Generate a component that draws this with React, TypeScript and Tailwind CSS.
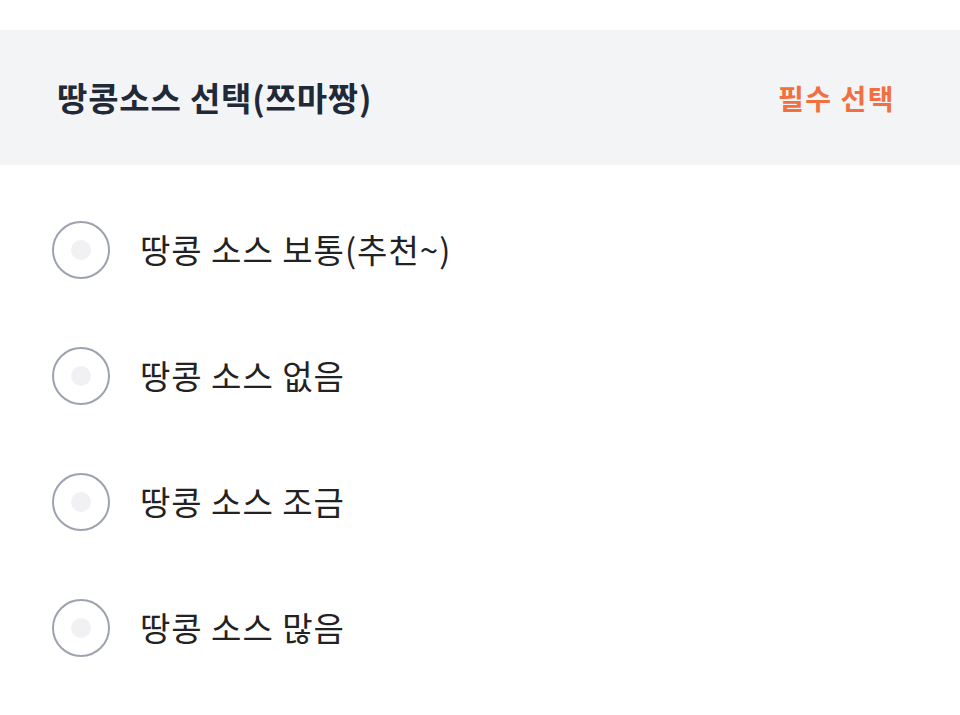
import React, { useState } from "react";

const options = [
  "땅콩 소스 보통(추천~)",
  "땅콩 소스 없음",
  "땅콩 소스 조금",
  "땅콩 소스 많음",
];

const App: React.FC = () => {
  const [selected, setSelected] = useState<number | null>(null);

  return (
    <div
      className="w-[960px] h-[715px] bg-white pt-[30px]"
      style={{ fontFamily: '"Noto Sans CJK KR", "Noto Sans", sans-serif' }}
    >
      {/* 헤더 */}
      <div className="h-[135px] bg-[#f3f4f6] flex items-center justify-between pl-[57px] pr-[65px]">
        <span className="text-[33px] font-bold text-[#1f2937] tracking-[0.8px]">땅콩소스 선택(쯔마짱)</span>
        <span className="text-[28px] font-bold text-[#f2703f] tracking-[1.5px]">필수 선택</span>
      </div>

      {/* 옵션 목록 */}
      <div className="pt-[22px]">
        {options.map((label, index) => (
          <button
            key={index}
            onClick={() => setSelected(index)}
            className="w-full h-[126px] flex items-center pl-[52px] text-left"
          >
            <span className="w-[58px] h-[58px] rounded-full border-2 border-[#9ca3af] flex items-center justify-center shrink-0">
              <span
                className={`w-[20px] h-[20px] rounded-full ${selected === index ? "bg-[#f2703f]" : "bg-[#f1f1f4]"}`}
              />
            </span>
            <span className="ml-[30px] text-[33px] text-[#222222] tracking-[1px]">{label}</span>
          </button>
        ))}
      </div>
    </div>
  );
};

export default App;
